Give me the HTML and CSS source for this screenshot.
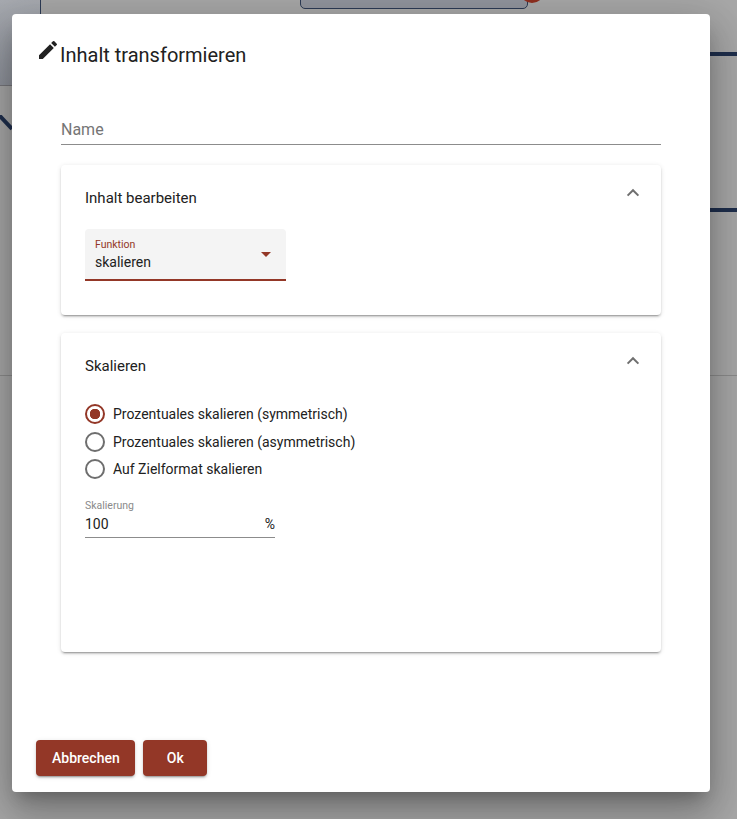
FILE: index.html
```html
<!DOCTYPE html>
<html lang="de">
<head>
<meta charset="utf-8">
<title>Inhalt transformieren</title>
<link rel="stylesheet" href="styles.css">
</head>
<body>
<div class="backdrop">
  <div class="bg-panel"></div>
  <div class="bg-hline"></div>
  <div class="bg-box"></div>
  <div class="bg-dot"></div>
  <div class="bg-bar bar-a"></div>
  <div class="bg-bar bar-b"></div>
  <svg class="bg-slash" width="12" height="24" viewBox="0 0 12 24"><path d="M-1 0 L12 14" stroke="#1f2f4d" stroke-width="4" fill="none"/></svg>
</div>
<main class="dialog">
  <h1 class="title">
    <svg class="pencil" width="24" height="24" viewBox="0 0 24 24"><path fill="#212121" d="M3 17.25V21h3.75L17.81 9.94l-3.75-3.75L3 17.25zM20.71 7.04a1 1 0 0 0 0-1.41l-2.34-2.34a1 1 0 0 0-1.41 0l-1.83 1.83 3.75 3.75 1.83-1.83z"/></svg>
    <span class="title-text">Inhalt transformieren</span>
  </h1>
  <div class="content">
    <div class="name-field">Name</div>
    <section class="card card-edit">
      <header class="card-head">
        <span class="card-title">Inhalt bearbeiten</span>
        <svg class="chev" width="14" height="9" viewBox="0 0 14 9"><path d="M1.6 7.6 7 2.2l5.4 5.4" fill="none" stroke="#6f6f6f" stroke-width="2"/></svg>
      </header>
      <div class="select">
        <div class="select-text">
          <span class="select-label">Funktion</span>
          <span class="select-value">skalieren</span>
        </div>
        <span class="arrow"></span>
      </div>
    </section>
    <section class="card card-scale">
      <header class="card-head">
        <span class="card-title">Skalieren</span>
        <svg class="chev" width="14" height="9" viewBox="0 0 14 9"><path d="M1.6 7.6 7 2.2l5.4 5.4" fill="none" stroke="#6f6f6f" stroke-width="2"/></svg>
      </header>
      <div class="radios">
        <label class="radio-row"><span class="radio on"></span>Prozentuales skalieren (symmetrisch)</label>
        <label class="radio-row"><span class="radio"></span>Prozentuales skalieren (asymmetrisch)</label>
        <label class="radio-row"><span class="radio"></span>Auf Zielformat skalieren</label>
      </div>
      <div class="scale-field">
        <span class="scale-label">Skalierung</span>
        <div class="scale-value"><span>100</span><span class="unit">%</span></div>
      </div>
    </section>
  </div>
  <footer class="actions">
    <button class="btn btn-cancel">Abbrechen</button>
    <button class="btn btn-ok">Ok</button>
  </footer>
</main>
</body>
</html>
```
FILE: styles.css
```css
html, body {
  margin: 0;
  height: 819px;
  overflow: hidden;
}
body {
  position: relative;
  background: #a8a8a8;
  font-family: Roboto, "Liberation Sans", sans-serif;
  color: #212121;
}
.backdrop {
  position: absolute;
  inset: 0;
  overflow: hidden;
  background: #a8a8a8;
}
.bg-panel {
  position: absolute;
  left: 0;
  top: 0;
  width: 40px;
  height: 85px;
  background: linear-gradient(180deg, #a8abb1, #8f939c);
  border-right: 1px solid #2d3b55;
  border-bottom: 1px solid #77777c;
}
.bg-hline {
  position: absolute;
  left: 0;
  right: 0;
  top: 375px;
  height: 1px;
  background: #8c8c8c;
}
.bg-box {
  position: absolute;
  left: 300px;
  top: -20px;
  width: 226px;
  height: 27px;
  background: #92959e;
  border: 1px solid #2d3b55;
  border-radius: 5px;
}
.bg-dot {
  position: absolute;
  left: 520px;
  top: -20px;
  width: 24px;
  height: 23px;
  border-radius: 50%;
  background: #8f2f20;
}
.bg-bar {
  position: absolute;
  left: 700px;
  right: 0;
  height: 4px;
  background: #1f2f4d;
}
.bar-a { top: 52px; }
.bar-b { top: 208px; }
.bg-slash {
  position: absolute;
  left: 0;
  top: 115px;
}
.dialog {
  position: relative;
  box-sizing: border-box;
  margin: 14px 0 0 12px;
  width: 698px;
  height: 778px;
  padding: 24px 24px 16px;
  background: #fff;
  border-radius: 4px;
  box-shadow: 0 11px 15px -7px rgba(0,0,0,.24), 0 24px 38px 3px rgba(0,0,0,.17), 0 9px 46px 8px rgba(0,0,0,.15);
  display: flex;
  flex-direction: column;
}
.title {
  margin: 0;
  display: flex;
  align-items: flex-start;
  height: 32px;
  font-size: 20px;
  font-weight: 400;
  line-height: 32px;
}
.title-text {
  margin-top: 1px;
}
.pencil {
  flex: none;
}
.content {
  margin-top: 45px;
  padding: 0 25px;
  display: flex;
  flex-direction: column;
  flex: 1;
}
.name-field {
  height: 30px;
  box-sizing: border-box;
  font-size: 16px;
  line-height: 22px;
  padding-top: 4px;
  color: #757575;
  border-bottom: 1px solid #8c8c8c;
}
.card {
  background: #fff;
  border-radius: 4px;
  box-shadow: 0 3px 1px -2px rgba(0,0,0,.2), 0 2px 2px 0 rgba(0,0,0,.14), 0 1px 5px 0 rgba(0,0,0,.12);
  padding: 0 24px;
  box-sizing: border-box;
}
.card-edit {
  margin-top: 20px;
  height: 150px;
}
.card-scale {
  margin-top: 18px;
  height: 319px;
}
.card-head {
  height: 64px;
  display: flex;
  align-items: center;
  justify-content: space-between;
  font-size: 15px;
  line-height: 20px;
}
.card-title {
  margin-top: 2px;
}
.chev {
  margin-right: -3px;
  margin-top: -10px;
}
.select {
  box-sizing: border-box;
  width: 201px;
  height: 52px;
  background: #f4f4f4;
  border-radius: 4px 4px 0 0;
  border-bottom: 2px solid #933727;
  padding: 2px 15px 0 10px;
  display: flex;
  align-items: center;
  justify-content: space-between;
}
.select-text {
  display: flex;
  flex-direction: column;
}
.select-label {
  font-size: 10.5px;
  line-height: 14px;
  color: #933727;
}
.select-value {
  font-size: 14px;
  line-height: 20px;
}
.arrow {
  width: 0;
  height: 0;
  margin-top: -2px;
  border-left: 5px solid transparent;
  border-right: 5px solid transparent;
  border-top: 5px solid #933727;
}
.radios {
  margin-top: 7px;
  display: flex;
  flex-direction: column;
  gap: 7.5px;
}
.radio-row {
  display: flex;
  align-items: center;
  gap: 8px;
  height: 20px;
  font-size: 14px;
}
.radio {
  box-sizing: border-box;
  width: 20px;
  height: 20px;
  border: 2px solid #6e6e6e;
  border-radius: 50%;
  display: block;
}
.radio.on {
  border-color: #933727;
  background: radial-gradient(circle, #933727 0, #933727 5px, #fff 5.5px);
}
.scale-field {
  margin-top: 18px;
  width: 190px;
  height: 41px;
  box-sizing: border-box;
  padding-top: 2px;
  border-bottom: 1px solid #8c8c8c;
}
.scale-label {
  display: block;
  font-size: 10.5px;
  line-height: 14px;
  color: #8a8a8a;
}
.scale-value {
  display: flex;
  justify-content: space-between;
  font-size: 14px;
  line-height: 20px;
  margin-top: 1px;
}
.actions {
  display: flex;
  gap: 8px;
}
.btn {
  height: 36px;
  padding: 0 15px 0 16px;
  border: 0;
  border-radius: 4px;
  background: #933727;
  color: #fff;
  font-family: inherit;
  font-size: 14px;
  font-weight: 500;
  box-shadow: 0 3px 1px -2px rgba(0,0,0,.2), 0 2px 2px 0 rgba(0,0,0,.14), 0 1px 5px 0 rgba(0,0,0,.12);
}
.btn-ok {
  width: 64px;
}
```
